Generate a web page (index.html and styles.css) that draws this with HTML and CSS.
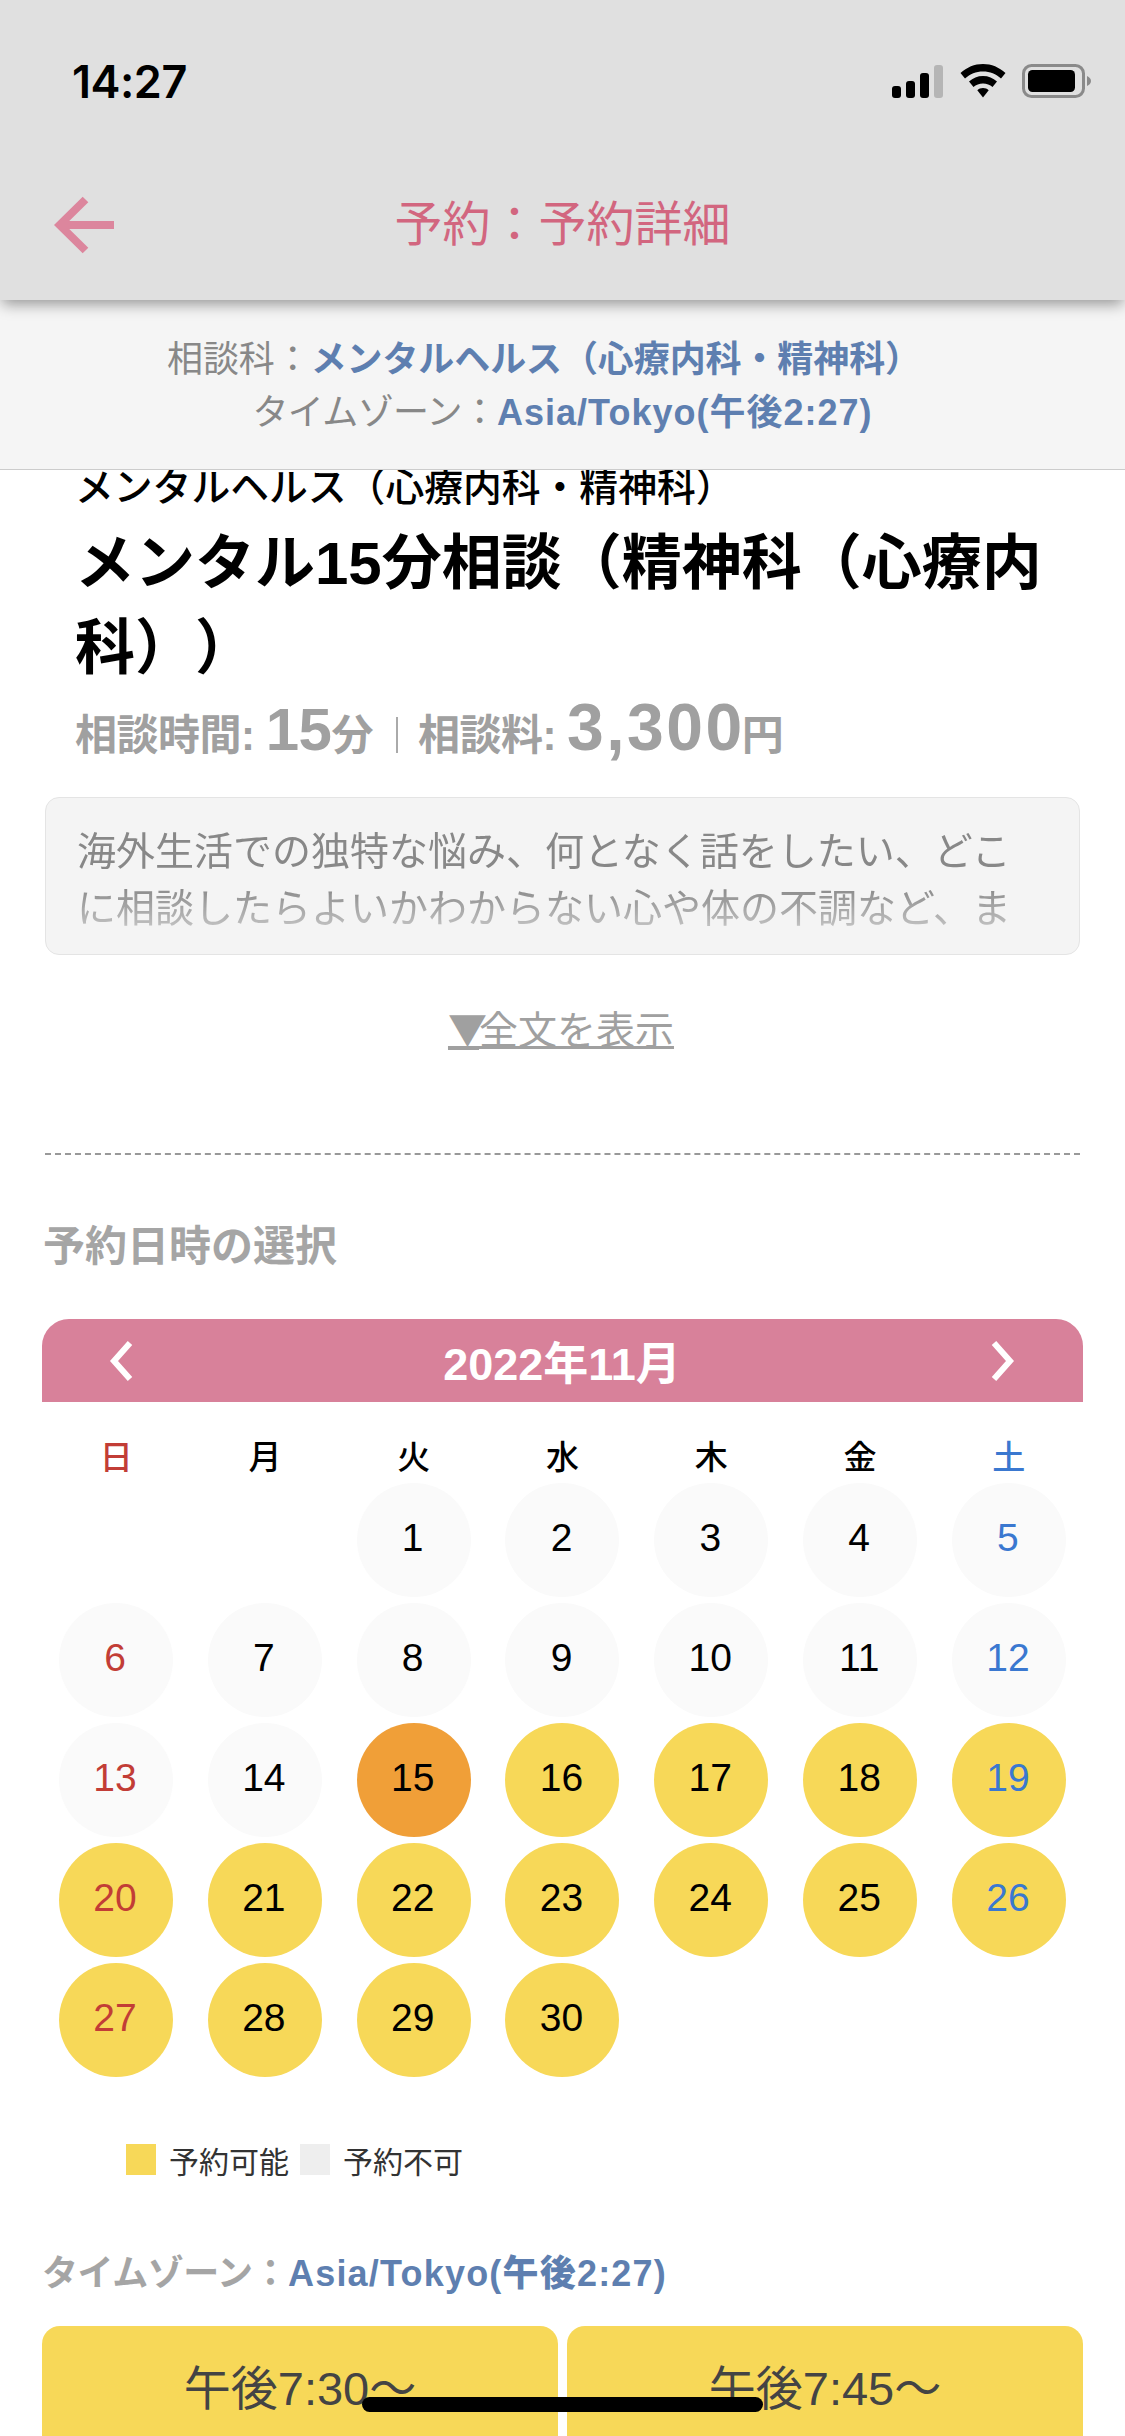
FILE: index.html
```html
<!DOCTYPE html>
<html lang="ja">
<head>
<meta charset="utf-8">
<title>予約詳細</title>
<link rel="stylesheet" href="styles.css">
</head>
<body>
<div class="phone">
  <header class="topbar">
    <div class="status">
      <span class="clock">14:27</span>
      <div class="status-icons">
        <svg class="signal" width="52" height="33" viewBox="0 0 52 33"><rect x="0" y="21" width="9" height="12" rx="3"/><rect x="14" y="16" width="9" height="17" rx="3"/><rect x="28" y="8" width="9" height="25" rx="3"/><rect x="42" y="0" width="9" height="33" rx="3" fill="#b5b5b5"/></svg>
        <svg class="wifi" width="46" height="34" viewBox="0 0 46 34"><path d="M23 0C14.500 0 6.800 3.300 0.500 9L5 14.500C10 10 16 7.500 23 7.500S36 10 41 14.500L45.500 9C39.200 3.300 31.500 0 23 0Z"/><path d="M23 12C17.500 12 13 14 9 17.500L13.500 23C16 20.700 19.300 19.500 23 19.500S30 20.700 32.500 23L37 17.500C33 14 28.500 12 23 12Z"/><path d="M23 24C20.700 24 18.800 24.800 17.300 26.200L23 33.500L28.700 26.200C27.200 24.800 25.300 24 23 24Z"/></svg>
        <svg class="battery" width="70" height="34" viewBox="0 0 70 34"><rect x="1.500" y="1.500" width="60" height="31" rx="8" fill="none" stroke="#8a8a8a" stroke-width="3"/><rect x="6" y="6" width="47" height="22" rx="4.500"/><path d="M65 12C67.500 13 69 15 69 17S67.500 21 65 22Z" fill="#8a8a8a"/></svg>
      </div>
    </div>
    <div class="navbar">
      <svg class="back" width="60" height="58" viewBox="0 0 60 58"><path d="M60 29H6M31.500 3.500L5.600 29L31.500 54.500" fill="none" stroke="#dc869d" stroke-width="8"/></svg>
      <h1 class="nav-title">予約：予約詳細</h1>
    </div>
  </header>
  <section class="subbar">
    <p class="sub-dept">相談科：<b>メンタルヘルス（心療内科・精神科）</b></p>
    <p><span class="tight">タイムゾーン：</span><b class="wide">Asia/Tokyo(午後2:27)</b></p>
  </section>
  <main class="main">
    <div class="scroll">
      <div class="intro">
        <p class="dept">メンタルヘルス（心療内科・精神科）</p>
        <h2 class="plan">メンタル15分相談（精神科（心療内科））</h2>
        <p class="meta">相談時間: <span class="num">15</span>分<i class="sep"></i>相談料: <span class="num big">3,300</span>円</p>
      </div>
      <div class="desc"><p>海外生活での独特な悩み、何となく話をしたい、どこに相談したらよいかわからない心や体の不調など、ま</p></div>
      <a class="more"><span class="tri">▼</span>全文を表示</a>
      <hr class="dash">
      <h3 class="label">予約日時の選択</h3>
      <div class="cal">
        <div class="cal-head">
          <svg width="25" height="40" viewBox="0 0 25 40"><path d="M21 2L5 20L21 38" fill="none" stroke="#fff" stroke-width="6"/></svg>
          <span>2022年11月</span>
          <svg width="25" height="40" viewBox="0 0 25 40"><path d="M4 2L20 20L4 38" fill="none" stroke="#fff" stroke-width="6"/></svg>
        </div>
        <div class="week"><span class="sun">日</span><span>月</span><span>火</span><span>水</span><span>木</span><span>金</span><span class="sat">土</span></div>
        <div class="days">
          <i></i><i></i>
          <b>1</b><b>2</b><b>3</b><b>4</b><b class="sat">5</b>
          <b class="sun">6</b><b>7</b><b>8</b><b>9</b><b>10</b><b>11</b><b class="sat">12</b>
          <b class="sun">13</b><b>14</b><b class="now">15</b><b class="ok">16</b><b class="ok">17</b><b class="ok">18</b><b class="ok sat">19</b>
          <b class="ok sun">20</b><b class="ok">21</b><b class="ok">22</b><b class="ok">23</b><b class="ok">24</b><b class="ok">25</b><b class="ok sat">26</b>
          <b class="ok sun">27</b><b class="ok">28</b><b class="ok">29</b><b class="ok">30</b>
        </div>
      </div>
      <div class="legend">
        <i class="sq yes"></i><span>予約可能</span><i class="sq no"></i><span>予約不可</span>
      </div>
      <p class="tz"><span class="tight">タイムゾーン：</span><b class="wide">Asia/Tokyo(午後2:27)</b></p>
      <div class="slots">
        <div class="slot">午後7:30〜</div>
        <div class="slot">午後7:45〜</div>
      </div>
    </div>
  </main>
  <div class="home"></div>
</div>
</body>
</html>
```
FILE: styles.css
```css
* { box-sizing: border-box; }
html, body { margin: 0; padding: 0; background: #fff; }
body { font-family: "Liberation Sans", "Noto Sans CJK JP", sans-serif; text-spacing-trim: space-all; }
p, h1, h2, h3 { margin: 0; }
.phone { position: relative; width: 1125px; height: 2436px; overflow: hidden; display: flex; flex-direction: column; }

.topbar { position: relative; z-index: 2; height: 300px; flex: none; background: #e0e0e0; box-shadow: 0 6px 14px -2px rgba(0,0,0,.4); }
.status { height: 164px; padding: 64px 33px 0 72px; display: flex; justify-content: space-between; align-items: flex-start; }
.clock { font: 600 45px/36px Inter, sans-serif; color: #000; letter-spacing: -.5px; }
.status-icons { display: flex; align-items: flex-start; gap: 16px; }
.status-icons svg { display: block; }
.signal { margin-top: 1px; }
.navbar { position: relative; height: 136px; display: flex; justify-content: center; }
.back { position: absolute; left: 54px; top: 32px; }
.nav-title { font-size: 48px; line-height: 122px; font-weight: 400; color: #d2667f; }

.subbar { flex: none; height: 170px; background: #f5f5f5; border-bottom: 1px solid #ccc; padding-top: 33px; text-align: center; font-size: 36px; line-height: 53px; color: #888; }
.subbar b, .tz b { color: #5e7fb0; }
.sub-dept { padding-right: 37px; letter-spacing: -.1px; }
.tight { letter-spacing: -.7px; }
.wide { letter-spacing: 1px; }

.main { flex: 1; overflow: hidden; }
.scroll { margin-top: -10px; }
.intro { padding: 0 75px; }
.dept { font-size: 38.800px; line-height: 56px; color: #000; font-weight: 500; white-space: nowrap; }
.plan { font-size: 60px; line-height: 85px; font-weight: 700; color: #000; margin-top: 5px; margin-right: -10px; }
.meta { margin-top: -4px; font-size: 42px; line-height: 80px; font-weight: 700; color: #a0a0a0; white-space: nowrap; letter-spacing: -.5px; }
.num { font-size: 60px; }
.num.big { font-size: 66px; letter-spacing: 2.500px; margin-right: -3px; }
.sep { display: inline-block; width: 2px; height: 36px; margin: 0 20px 0 23px; background: #aaa; vertical-align: -3px; }

.desc { margin: 21px 45px 0; height: 158px; padding: 25px 31px 0; background: #f4f4f4; border: 1px solid #e4e4e4; border-radius: 14px; overflow: hidden; }
.desc p { font-size: 39px; line-height: 57px; color: #888; height: 114px; overflow: hidden; -webkit-mask-image: linear-gradient(#000 55%, rgba(0,0,0,.35)); mask-image: linear-gradient(#000 55%, rgba(0,0,0,.35)); }
.more { display: block; height: 50px; margin-top: 47px; padding-right: 3px; text-align: center; font-size: 39px; line-height: 50px; color: #a0a0a0; text-decoration: underline; }
.tri { font-family: "Noto Sans CJK JP", sans-serif; letter-spacing: -8px; text-decoration: underline; text-decoration-thickness: 4px; }
.dash { margin: 100.500px 45px 0; border: 0; border-top: 2px dashed #999; height: 0; }
.label { margin: 67px 43px 0; font-size: 42px; line-height: 50px; color: #a5a5a5; font-weight: 700; }

.cal { margin: 47.500px 42px 0; }
.cal-head { height: 83px; padding: 0 68px 0 67px; background: #d8819a; border-radius: 27px 27px 0 0; display: flex; justify-content: space-between; align-items: center; color: #fff; font-size: 45px; font-weight: 700; }
.week { display: grid; grid-template-columns: repeat(7, 1fr); height: 81px; padding-top: 33.500px; text-align: center; font-size: 33px; line-height: 44px; font-weight: 500; color: #000; }
.days { display: grid; grid-template-columns: repeat(7, 114px); justify-content: space-between; grid-auto-rows: 114px; row-gap: 6px; padding: 0 17px; }
.days b { display: flex; align-items: center; justify-content: center; border-radius: 50%; background: #fafafa; font-size: 39px; font-weight: 400; color: #000; padding: 0 2px 4px 0; }
.days b.ok { background: #f7d858; }
.days b.now { background: #f09f38; }
.cal .sun { color: #c23d36; }
.cal .sat { color: #3a78d0; }

.legend { margin: 67px 0 0 126px; display: flex; align-items: center; height: 31px; font-size: 30px; color: #333; }
.sq { width: 30px; height: 31px; margin-right: 13px; }
.sq.yes { background: #f7d858; }
.sq.no { background: #eee; margin-left: 11px; }
.tz { margin: 73.500px 0 0 42px; font-size: 36px; line-height: 50px; color: #a5a5a5; font-weight: 700; }
.tz .wide { letter-spacing: 1.200px; }
.tz .tight { letter-spacing: -.5px; }
.slots { margin: 27px 42px 0; display: grid; grid-template-columns: 1fr 1fr; gap: 9px; }
.slot { height: 200px; padding-top: 28.500px; background: #f7d858; border-radius: 18px; text-align: center; font-size: 47px; line-height: 70px; color: #444; }

.home { position: absolute; left: 362px; top: 2397px; width: 401px; height: 15px; border-radius: 8px; background: #000; }
```
